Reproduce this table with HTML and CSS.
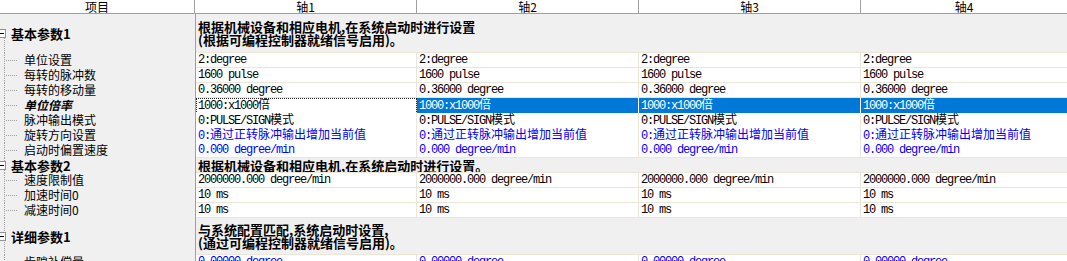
FILE: index.html
```html
<!DOCTYPE html>
<html lang="zh">
<head>
<meta charset="utf-8">
<title>参数</title>
<link rel="stylesheet" href="styles.css">
</head>
<body>
<div class="sheet">
  <div class="hdr">
    <div class="h">项目</div>
    <div class="h">轴1</div>
    <div class="h">轴2</div>
    <div class="h">轴3</div>
    <div class="h">轴4</div>
  </div>

  <div class="grow g-tall">
    <div class="lab grp first"><span class="box"></span>基本参数1</div>
    <div class="desc">根据机械设备和相应电机,在系统启动时进行设置<br>(根据可编程控制器就绪信号启用)。</div>
  </div>

  <div class="row">
    <div class="lab leaf">单位设置</div>
    <div class="c">2:degree</div><div class="c">2:degree</div><div class="c">2:degree</div><div class="c">2:degree</div>
  </div>
  <div class="row">
    <div class="lab leaf">每转的脉冲数</div>
    <div class="c">1600 pulse</div><div class="c">1600 pulse</div><div class="c">1600 pulse</div><div class="c">1600 pulse</div>
  </div>
  <div class="row">
    <div class="lab leaf">每转的移动量</div>
    <div class="c">0.36000 degree</div><div class="c">0.36000 degree</div><div class="c">0.36000 degree</div><div class="c">0.36000 degree</div>
  </div>
  <div class="row sel">
    <div class="lab leaf cur">单位倍率</div>
    <div class="c focus">1000:x1000<span class="cjk">倍</span></div>
    <div class="c hi">1000:x1000<span class="cjk">倍</span></div>
    <div class="c hi">1000:x1000<span class="cjk">倍</span></div>
    <div class="c hi">1000:x1000<span class="cjk">倍</span></div>
  </div>
  <div class="row">
    <div class="lab leaf">脉冲输出模式</div>
    <div class="c">0:PULSE/SIGN<span class="cjk">模式</span></div><div class="c">0:PULSE/SIGN<span class="cjk">模式</span></div><div class="c">0:PULSE/SIGN<span class="cjk">模式</span></div><div class="c">0:PULSE/SIGN<span class="cjk">模式</span></div>
  </div>
  <div class="row">
    <div class="lab leaf">旋转方向设置</div>
    <div class="c blue">0:<span class="cjk">通过正转脉冲输出增加当前值</span></div><div class="c blue">0:<span class="cjk">通过正转脉冲输出增加当前值</span></div><div class="c blue">0:<span class="cjk">通过正转脉冲输出增加当前值</span></div><div class="c blue">0:<span class="cjk">通过正转脉冲输出增加当前值</span></div>
  </div>
  <div class="row">
    <div class="lab leaf">启动时偏置速度</div>
    <div class="c blue">0.000 degree/min</div><div class="c blue">0.000 degree/min</div><div class="c blue">0.000 degree/min</div><div class="c blue">0.000 degree/min</div>
  </div>

  <div class="grow g-short">
    <div class="lab grp"><span class="box"></span>基本参数2</div>
    <div class="desc">根据机械设备和相应电机,在系统启动时进行设置。</div>
  </div>

  <div class="row">
    <div class="lab leaf">速度限制值</div>
    <div class="c">2000000.000 degree/min</div><div class="c">2000000.000 degree/min</div><div class="c">2000000.000 degree/min</div><div class="c">2000000.000 degree/min</div>
  </div>
  <div class="row">
    <div class="lab leaf">加速时间0</div>
    <div class="c">10 ms</div><div class="c">10 ms</div><div class="c">10 ms</div><div class="c">10 ms</div>
  </div>
  <div class="row">
    <div class="lab leaf">减速时间0</div>
    <div class="c">10 ms</div><div class="c">10 ms</div><div class="c">10 ms</div><div class="c">10 ms</div>
  </div>

  <div class="grow g-tall3">
    <div class="lab grp"><span class="box"></span>详细参数1</div>
    <div class="desc">与系统配置匹配,系统启动时设置,<br>(通过可编程控制器就绪信号启用)。</div>
  </div>

  <div class="row">
    <div class="lab leaf">齿隙补偿量</div>
    <div class="c blue">0.00000 degree</div><div class="c blue">0.00000 degree</div><div class="c blue">0.00000 degree</div><div class="c blue">0.00000 degree</div>
  </div>
</div>
</body>
</html>
```

FILE: styles.css
```css
* { box-sizing: border-box; }
html, body {
  margin: 0;
  padding: 0;
  background: #ffffff;
  overflow: hidden;
}
body {
  width: 1067px;
  height: 261px;
  font-family: "Noto Sans CJK SC", "Liberation Sans", sans-serif;
  font-size: 12px;
  color: #000;
}
.sheet {
  display: flex;
  flex-direction: column;
  width: 1067px;
}

/* header */
.hdr {
  display: grid;
  grid-template-columns: 195px 222px 222px 222px 1fr;
  height: 14px;
  border-bottom: 1px solid #a0a0a0;
  background: #ffffff;
}
.h {
  border-right: 1px solid #a0a0a0;
  text-align: center;
  line-height: 13px;
  font-size: 12px;
  white-space: nowrap;
}
.h:last-child { border-right: none; }

/* rows */
.row {
  display: grid;
  grid-template-columns: 196px 221px 222px 222px 1fr;
  height: 15px;
}
.grow {
  display: grid;
  grid-template-columns: 196px 1fr;
}
.g-tall { height: 39px; }
.g-short { height: 15px; }
.g-tall3 { height: 37px; }

.lab {
  position: relative;
  background: #f0f0f0;
  border-right: 1px solid #a0a0a0;
  white-space: nowrap;
  line-height: 14px;
}
.lab::before {
  content: "";
  position: absolute;
  left: 4px;
  top: 0;
  bottom: 0;
  width: 1px;
  background: repeating-linear-gradient(to bottom, #a0a0a0 0 1px, transparent 1px 2px);
}
.lab.first::before { top: 50%; }
.leaf { padding-left: 24px; }
.leaf::after {
  content: "";
  position: absolute;
  left: 6px;
  top: 7px;
  width: 11px;
  height: 1px;
  background: repeating-linear-gradient(to right, #a0a0a0 0 1px, transparent 1px 2px);
}
.cur {
  font-weight: bold;
  font-style: italic;
}
.grp {
  display: flex;
  align-items: center;
  font-weight: bold;
  font-size: 13px;
}
.box {
  position: relative;
  z-index: 1;
  width: 9px;
  height: 9px;
  margin-left: -3px;
  margin-right: 5px;
  border: 1px solid #919191;
  background: #ffffff;
  flex: none;
}
.box::before {
  content: "";
  position: absolute;
  left: 1px;
  top: 3px;
  width: 5px;
  height: 1px;
  background: #000;
}

.desc {
  display: flex;
  align-items: center;
  background: #f0f0f0;
  border-bottom: 1px solid #ebe6d6;
  padding-left: 2px;
  font-weight: bold;
  font-size: 13px;
  line-height: 13px;
  white-space: nowrap;
  overflow: hidden;
}

.c {
  background: #ffffff;
  border-right: 1px solid #ebe6d6;
  border-bottom: 1px solid #ebe6d6;
  padding-left: 2px;
  font-family: "Liberation Mono", "Noto Sans CJK SC", monospace;
  font-size: 12px;
  letter-spacing: -1.2px;
  line-height: 14px;
  white-space: nowrap;
}
.c:last-child { border-right: none; }
.cjk {
  font-family: "Noto Sans CJK SC", sans-serif;
  letter-spacing: 0;
  line-height: 12px;
}
.blue { color: #0000ff; }
.hi {
  background: #0078d7;
  color: #ffffff;
  border-right-color: #ffffff;
}
.focus {
  outline: 1px dotted #222;
  outline-offset: -1px;
}
```
